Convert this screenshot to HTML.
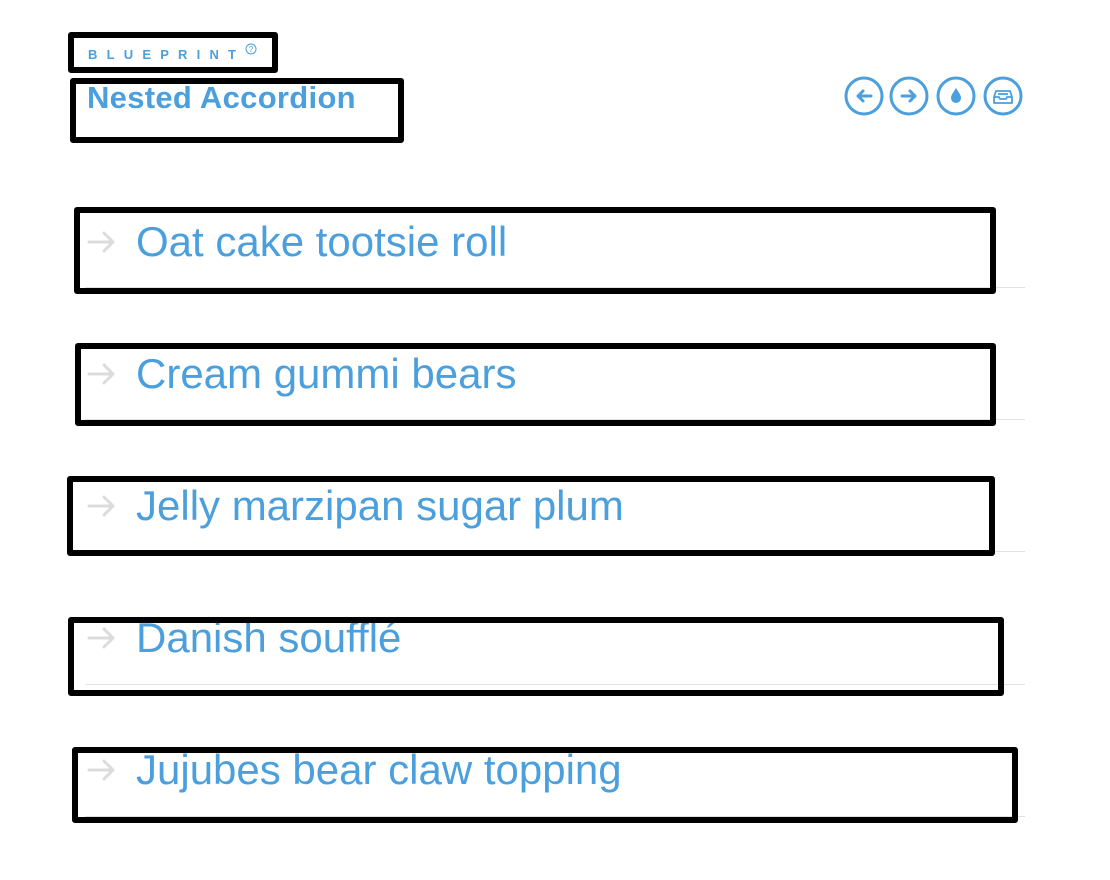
<!DOCTYPE html>
<html><head><meta charset="utf-8"><style>
html,body{margin:0;padding:0;background:#fff;width:1110px;height:880px;overflow:hidden;position:relative;font-family:"Liberation Sans",sans-serif}
.a{position:absolute}
.box{position:absolute;border:6px solid #000;border-radius:3px;box-sizing:border-box}
.item{position:absolute;left:136px;font-size:42px;line-height:1;color:#4a9fdc;letter-spacing:0;white-space:nowrap}
.arr{position:absolute;left:87px}
.line{position:absolute;left:85px;width:940px;height:1px;background:#e2e2e2}
</style></head><body>
<div class="a" style="left:88px;top:48px;font-size:13px;font-weight:bold;letter-spacing:9.2px;color:#4a9fdc;line-height:14px">BLUEPRINT</div>
<svg class="a" style="left:245px;top:43px" width="12" height="12" viewBox="0 0 12 12"><circle cx="6" cy="6" r="5" fill="none" stroke="#4a9fdc" stroke-width="1"/><text x="6" y="9" font-size="8" text-anchor="middle" fill="#4a9fdc" font-family="Liberation Sans">?</text></svg>
<div class="a" style="left:87px;top:82px;font-size:31px;font-weight:bold;color:#4a9fdc;line-height:31px;letter-spacing:0.3px">Nested Accordion</div>

<svg class="a" style="left:840px;top:72px" width="190" height="50" viewBox="0 0 190 50">
<g fill="none" stroke="#4a9fdc" stroke-width="3">
<circle cx="24" cy="24" r="18"/><circle cx="69" cy="24" r="18"/><circle cx="116" cy="24" r="18"/><circle cx="163" cy="24" r="18"/>
</g>
<g fill="none" stroke="#4a9fdc" stroke-width="3" stroke-linecap="round" stroke-linejoin="round">
<path d="M31 24H18M23 19l-5 5 5 5"/>
<path d="M62 24h13M70 19l5 5-5 5"/>
</g>
<path d="M116 16c-3 5-5 7-5 10a5 5 0 0 0 10 0c0-3-2-5-5-10z" fill="#4a9fdc"/>
<g fill="none" stroke="#4a9fdc" stroke-width="1.8" stroke-linejoin="round">
<path d="M156 19h14l2 6v6h-18v-6z"/><path d="M154 25h5l1 2h6l1-2h5"/><path d="M158 22h10"/>
</g>
</svg>

<div class="line" style="top:287px"></div>
<div class="line" style="top:419px"></div>
<div class="line" style="top:551px"></div>
<div class="line" style="top:684px"></div>
<div class="line" style="top:816px"></div>

<svg width="0" height="0" style="position:absolute"><defs><g id="ar"><path d="M2 14h24M17 5l9 9-9 9" fill="none" stroke="#dcdcdc" stroke-width="3" stroke-linecap="round" stroke-linejoin="round"/></g></defs></svg>
<svg class="arr" style="top:228px" width="30" height="28"><use href="#ar"/></svg><div class="item" style="top:221px">Oat cake tootsie roll</div>
<svg class="arr" style="top:360px" width="30" height="28"><use href="#ar"/></svg><div class="item" style="top:353px">Cream gummi bears</div>
<svg class="arr" style="top:492px" width="30" height="28"><use href="#ar"/></svg><div class="item" style="top:485px">Jelly marzipan sugar plum</div>
<svg class="arr" style="top:624px" width="30" height="28"><use href="#ar"/></svg><div class="item" style="top:617px">Danish soufflé</div>
<svg class="arr" style="top:756px" width="30" height="28"><use href="#ar"/></svg><div class="item" style="top:749px">Jujubes bear claw topping</div>

<div class="box" style="left:68px;top:32px;width:210px;height:41px"></div>
<div class="box" style="left:70px;top:78px;width:334px;height:65px"></div>
<div class="box" style="left:74px;top:207px;width:922px;height:87px"></div>
<div class="box" style="left:75px;top:343px;width:921px;height:83px"></div>
<div class="box" style="left:67px;top:476px;width:928px;height:80px"></div>
<div class="box" style="left:68px;top:617px;width:936px;height:79px"></div>
<div class="box" style="left:72px;top:747px;width:946px;height:76px"></div>
</body></html>
